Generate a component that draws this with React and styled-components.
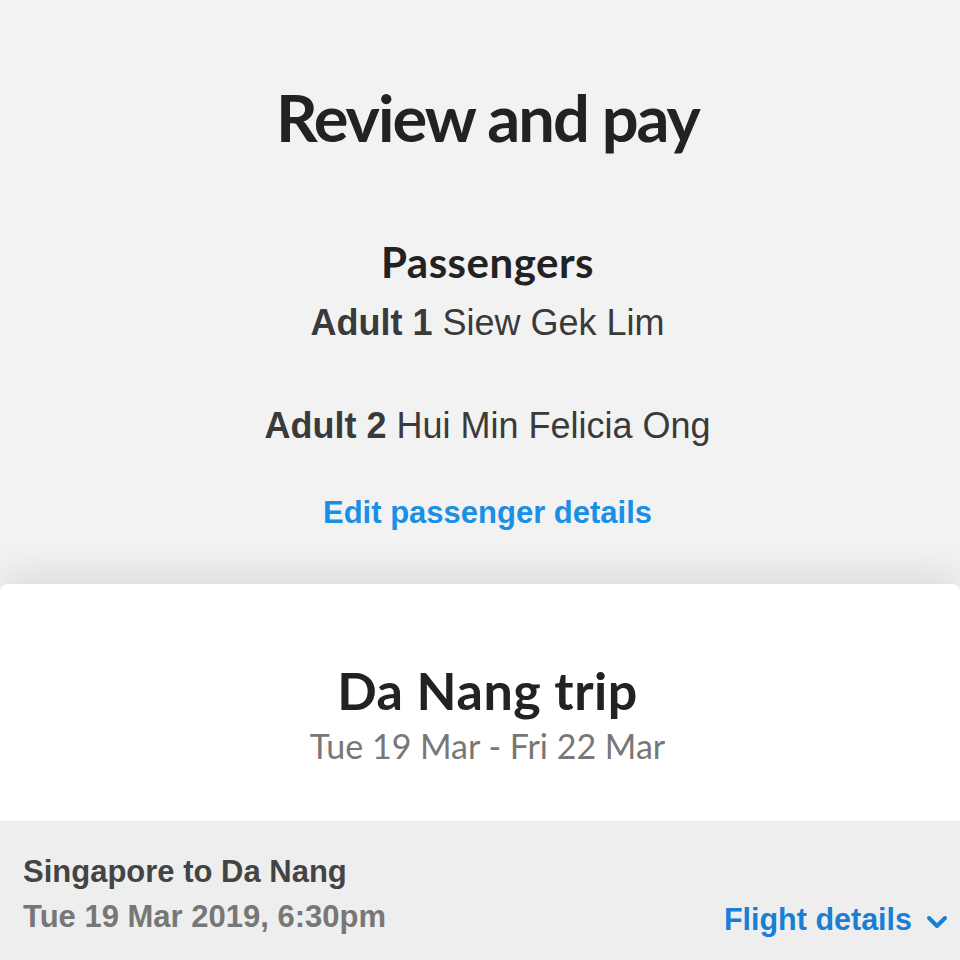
import React from "react";
import styled, { createGlobalStyle } from "styled-components";

const Global = createGlobalStyle`
  html, body { margin: 0; padding: 0; background: #f2f2f2; }
  body { font-family: "Liberation Sans", Arial, sans-serif; }
`;

const Page = styled.div`
  width: 960px;
  height: 960px;
  overflow: hidden;
  background: #f2f2f2;
  display: flex;
  flex-direction: column;
`;

const Top = styled.section`
  padding: 77px 0 51px 15px;
  display: flex;
  flex-direction: column;
  align-items: center;
  text-align: center;
`;

const Title = styled.h1`
  margin: 0;
  font-family: Lato, "Open Sans", sans-serif;
  font-weight: 700;
  font-size: 65px;
  line-height: 80px;
  letter-spacing: -2px;
  color: #222;
`;

const SectionHead = styled.h2`
  margin: 80px 0 0;
  font-family: Lato, "Open Sans", sans-serif;
  font-weight: 700;
  font-size: 42px;
  line-height: 50px;
  letter-spacing: 0.5px;
  color: #222;
`;

const Passenger = styled.div`
  margin-top: ${(p) => p.$gap}px;
  font-size: 36px;
  line-height: 50px;
  color: #3a3a3a;
  b { font-weight: 700; }
`;

const Link = styled.a`
  margin-top: 42px;
  font-size: 31px;
  line-height: 40px;
  font-weight: 700;
  color: #1a8fe6;
  text-decoration: none;
`;

const Card = styled.section`
  flex: 1;
  background: #fff;
  border-radius: 8px 8px 0 0;
  box-shadow: 0 -12px 36px rgba(0, 0, 0, 0.09);
  display: flex;
  flex-direction: column;
`;

const Trip = styled.div`
  padding: 76px 0 53px 15px;
  display: flex;
  flex-direction: column;
  align-items: center;
  font-family: Lato, "Open Sans", sans-serif;
`;

const TripTitle = styled.h2`
  margin: 0;
  font-size: 52px;
  line-height: 60px;
  letter-spacing: 0.5px;
  font-weight: 700;
  color: #222;
`;

const TripDates = styled.div`
  margin-top: 4px;
  font-size: 34px;
  line-height: 44px;
  color: #777;
`;

const FlightRow = styled.div`
  flex: 1;
  background: #eeeeee;
  padding: 33px 12px 0 23px;
  display: flex;
  justify-content: space-between;
  align-items: flex-start;
`;

const FlightInfo = styled.div`
  display: flex;
  flex-direction: column;
`;

const Route = styled.div`
  font-size: 31px;
  line-height: 36px;
  font-weight: 700;
  color: #444;
`;

const Depart = styled.div`
  margin-top: 7px;
  font-size: 31px;
  line-height: 40px;
  font-weight: 700;
  color: #777;
`;

const Details = styled.a`
  margin-top: 45px;
  display: flex;
  align-items: center;
  gap: 14px;
  font-size: 30.5px;
  line-height: 40px;
  font-weight: 700;
  color: #1a7fd4;
  text-decoration: none;
`;

const Chevron = () => (
  <svg width="22" height="16" viewBox="0 0 22 16" style={{ marginTop: 6 }}>
    <polyline
      points="3,4 11,12 19,4"
      fill="none"
      stroke="#1a7fd4"
      strokeWidth="4"
      strokeLinecap="round"
      strokeLinejoin="round"
    />
  </svg>
);

export default function App() {
  return (
    <Page>
      <Global />
      <Top>
        <Title>Review and pay</Title>
        <SectionHead>Passengers</SectionHead>
        <Passenger $gap={11}>
          <b>Adult 1</b> Siew Gek Lim
        </Passenger>
        <Passenger $gap={53}>
          <b>Adult 2</b> Hui Min Felicia Ong
        </Passenger>
        <Link href="#">Edit passenger details</Link>
      </Top>
      <Card>
        <Trip>
          <TripTitle>Da Nang trip</TripTitle>
          <TripDates>Tue 19 Mar - Fri 22 Mar</TripDates>
        </Trip>
        <FlightRow>
          <FlightInfo>
            <Route>Singapore to Da Nang</Route>
            <Depart>Tue 19 Mar 2019, 6:30pm</Depart>
          </FlightInfo>
          <Details href="#">
            Flight details
            <Chevron />
          </Details>
        </FlightRow>
      </Card>
    </Page>
  );
}
